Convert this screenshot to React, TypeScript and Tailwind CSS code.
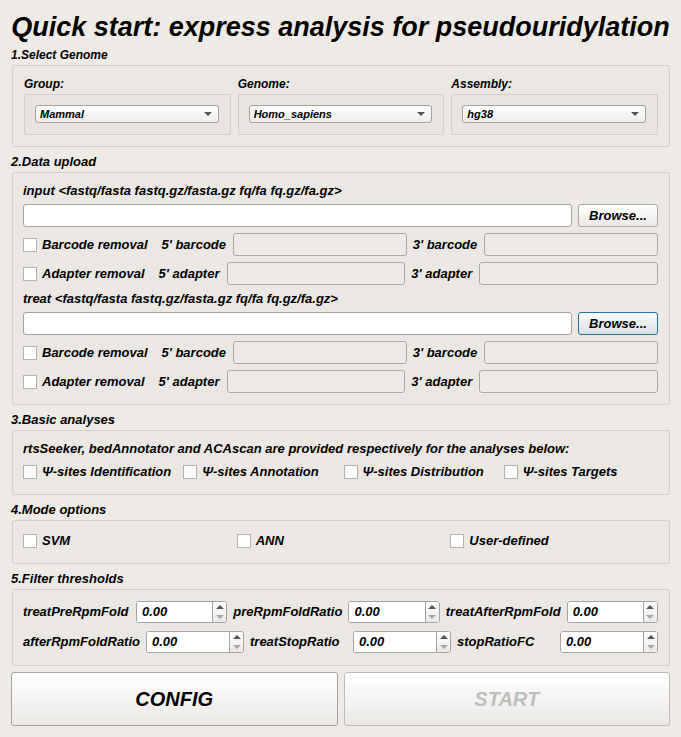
import { useId, useState, type ReactNode } from "react";

function Heading({ children, small }: { children: ReactNode; small?: boolean }) {
  return (
    <h2 className={`h-5 leading-5 whitespace-nowrap ${small ? "text-[12px]" : "mt-[5px] text-[13px]"}`}>
      {children}
    </h2>
  );
}

function Panel({ children, className }: { children: ReactNode; className: string }) {
  return (
    <section className={`ml-px rounded-[2px] border border-[#d4d1cd] bg-[#ebe8e3] ${className}`}>
      {children}
    </section>
  );
}

function Picker({ label, options }: { label: string; options: string[] }) {
  const id = useId();
  return (
    <div className="min-w-0">
      <label htmlFor={id} className="block h-5 text-[12px] leading-5">
        {label}
      </label>
      <div className="rounded-[2px] border border-[#d1cecb] bg-[#e8e5e0] pt-2.5 pr-[11px] pb-[11px] pl-2.5">
        <div className="relative">
          <select
            id={id}
            className="block h-[18px] w-full appearance-none rounded-[3px] border border-[#a5a29f] bg-linear-to-b from-white to-[#eeedeb] pr-5 pl-1 text-[11px] leading-4"
          >
            {options.map((o) => (
              <option key={o}>{o}</option>
            ))}
          </select>
          <svg
            viewBox="0 0 8 4"
            className="pointer-events-none absolute top-[7px] right-[7px] h-1 w-2"
            fill="#555452"
            aria-hidden="true"
          >
            <path d="M0 0h8L4 4z" />
          </svg>
        </div>
      </div>
    </div>
  );
}

function Check({ label }: { label: string }) {
  return (
    <label className="flex h-5 items-center gap-[5px] whitespace-nowrap">
      <input
        type="checkbox"
        className="size-3.5 shrink-0 appearance-none border border-[#b7b4b0] bg-white checked:bg-[#3b7ea8]"
      />
      {label}
    </label>
  );
}

function DisabledField({ label }: { label: string }) {
  const id = useId();
  return (
    <>
      <label htmlFor={id} className="whitespace-nowrap">
        {label}
      </label>
      <input
        id={id}
        type="text"
        disabled
        className="ml-[7px] h-[23px] w-0 min-w-0 flex-1 rounded-[3px] border border-[#aaa7a4] bg-[#eeebe6] px-1"
      />
    </>
  );
}

function TrimRow({ kind, name }: { kind: string; name: string }) {
  return (
    <div className="mt-1.5 flex items-center">
      <Check label={`${name} removal`} />
      <span className="w-3.5 shrink-0" />
      <DisabledField label={`5' ${kind}`} />
      <span className="w-1.5 shrink-0" />
      <DisabledField label={`3' ${kind}`} />
    </div>
  );
}

function Upload({ name, active }: { name: string; active?: boolean }) {
  const id = useId();
  return (
    <div>
      <label htmlFor={id} className="block h-5 leading-5">
        {`${name} <fastq/fasta fastq.gz/fasta.gz fq/fa fq.gz/fa.gz>`}
      </label>
      <div className="mt-[3px] flex gap-1.5">
        <input
          id={id}
          type="text"
          className="h-[23px] min-w-0 flex-1 rounded-[3px] border border-[#a5a29f] bg-white px-1"
        />
        <button
          type="button"
          className={`h-[23px] w-20 rounded-[3px] border bg-linear-to-b ${
            active ? "border-[#23739f] from-[#fbfcfd] to-[#d9e1e5]" : "border-[#a9a6a3] from-white to-[#ebe9e7]"
          }`}
        >
          Browse...
        </button>
      </div>
      <TrimRow kind="barcode" name="Barcode" />
      <TrimRow kind="adapter" name="Adapter" />
    </div>
  );
}

function Spin({ label, minWidth }: { label: string; minWidth: string }) {
  const id = useId();
  const [value, setValue] = useState("0.00");
  const step = (d: number) => setValue(Math.max(0, (Number(value) || 0) + d).toFixed(2));
  return (
    <>
      <label htmlFor={id} className={`whitespace-nowrap ${minWidth}`}>
        {label}
      </label>
      <div className="flex h-[22px] min-w-0 flex-1 overflow-hidden rounded-[3px] border border-[#a5a29f] bg-white">
        <input
          id={id}
          type="text"
          inputMode="decimal"
          value={value}
          onChange={(e) => setValue(e.target.value)}
          className="w-0 min-w-0 flex-1 bg-white pl-[5px]"
        />
        <div className="flex w-3.5 flex-col border-l border-[#a5a29f] bg-linear-to-b from-white to-[#ebe9e7]">
          <button
            type="button"
            aria-label={`Increase ${label}`}
            onClick={() => step(1)}
            className="flex flex-1 items-center justify-center"
          >
            <svg viewBox="0 0 8 4" className="h-1 w-2" fill="#555452" aria-hidden="true">
              <path d="M0 4h8L4 0z" />
            </svg>
          </button>
          <button
            type="button"
            aria-label={`Decrease ${label}`}
            onClick={() => step(-1)}
            className="flex flex-1 items-center justify-center"
          >
            <svg viewBox="0 0 8 4" className="h-1 w-2" fill="#aaa8a6" aria-hidden="true">
              <path d="M0 0h8L4 4z" />
            </svg>
          </button>
        </div>
      </div>
    </>
  );
}

export default function App() {
  return (
    <main className="min-h-screen bg-[#eeebe6] px-[11px] pt-[9px] pb-[11px] font-['Liberation_Sans',Arial,sans-serif] text-[13px] font-bold text-black italic">
      <h1 className="h-9 text-center text-[27px] leading-9 whitespace-nowrap">
        Quick start: express analysis for pseudouridylation
      </h1>

      <Heading small>1.Select Genome</Heading>
      <Panel className="grid grid-cols-3 gap-[7px] px-[11px] pt-2 pb-[11px]">
        <Picker label="Group:" options={["Mammal"]} />
        <Picker label="Genome:" options={["Homo_sapiens"]} />
        <Picker label="Assembly:" options={["hg38"]} />
      </Panel>

      <Heading>2.Data upload</Heading>
      <Panel className="flex flex-col gap-1 pt-2 pr-[11px] pb-[11px] pl-2.5">
        <Upload name="input" />
        <Upload name="treat" active />
      </Panel>

      <Heading>3.Basic analyses</Heading>
      <Panel className="pt-2 pr-[11px] pb-3 pl-2.5">
        <p className="h-5 leading-5">
          rtsSeeker, bedAnnotator and ACAscan are provided respectively for the analyses below:
        </p>
        <div className="mt-[3px] grid grid-cols-4 gap-1.5">
          <Check label="Ψ-sites Identification" />
          <Check label="Ψ-sites Annotation" />
          <Check label="Ψ-sites Distribution" />
          <Check label="Ψ-sites Targets" />
        </div>
      </Panel>

      <Heading>4.Mode options</Heading>
      <Panel className="grid grid-cols-3 gap-1.5 pt-2.5 pr-[11px] pb-3 pl-2.5">
        <Check label="SVM" />
        <Check label="ANN" />
        <Check label="User-defined" />
      </Panel>

      <Heading>5.Filter thresholds</Heading>
      <Panel className="flex flex-col gap-2 pt-[11px] pr-[11px] pb-3 pl-2.5">
        <div className="flex items-center gap-1.5">
          <Spin label="treatPreRpmFold" minWidth="min-w-[107px]" />
          <Spin label="preRpmFoldRatio" minWidth="min-w-[107px]" />
          <Spin label="treatAfterRpmFold" minWidth="min-w-[107px]" />
        </div>
        <div className="flex items-center gap-1.5">
          <Spin label="afterRpmFoldRatio" minWidth="min-w-[97px]" />
          <Spin label="treatStopRatio" minWidth="min-w-[97px]" />
          <Spin label="stopRatioFC" minWidth="min-w-[97px]" />
        </div>
      </Panel>

      <div className="mt-1.5 grid grid-cols-2 gap-1.5 text-[20px]">
        <button
          type="button"
          className="h-[54px] rounded-[3px] border border-[#a5a29f] bg-linear-to-b from-white to-[#ebe9e6]"
        >
          CONFIG
        </button>
        <button
          type="button"
          disabled
          className="h-[54px] rounded-[3px] border border-[#bebbb8] bg-linear-to-b from-white to-[#ebe9e6] text-[#bebebe]"
        >
          START
        </button>
      </div>
    </main>
  );
}
